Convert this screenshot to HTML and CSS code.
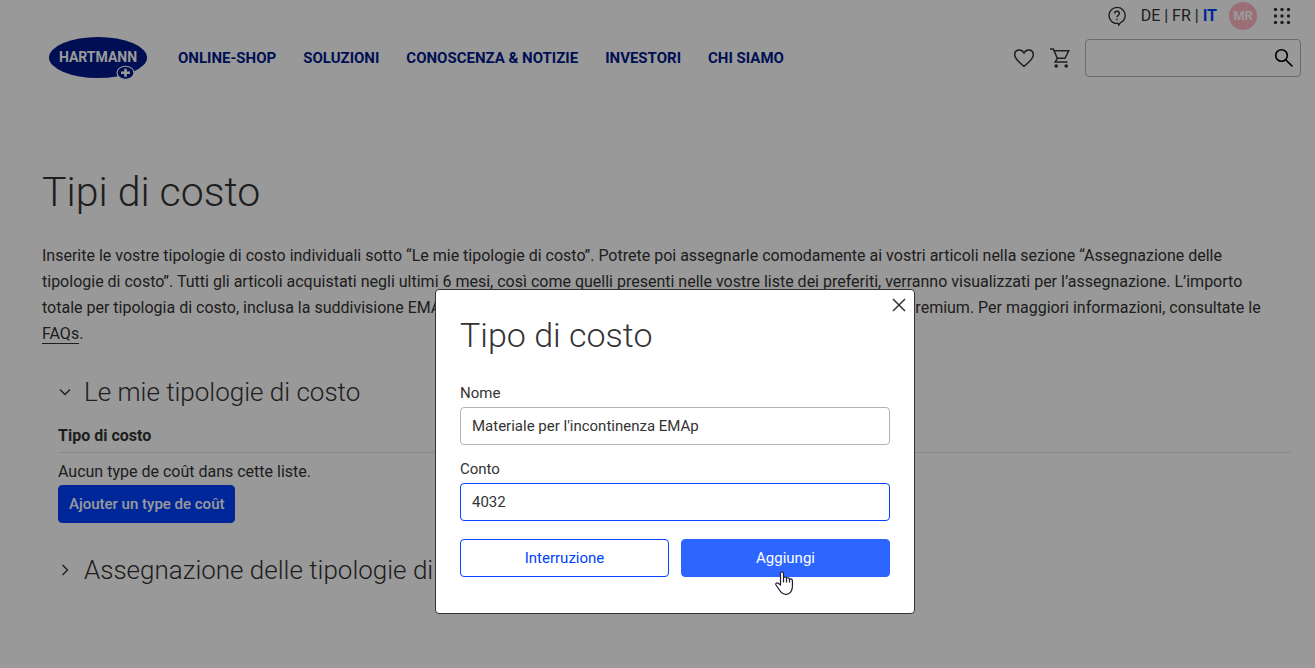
FILE: index.html
```html
<!DOCTYPE html>
<html lang="it">
<head>
    <meta charset="UTF-8">
    <meta name="viewport" content="width=device-width, initial-scale=1">
    <title>Tipi di costo</title>
    <link rel="stylesheet" href="styles.css">
</head>
<body>
<header class="header">
    <div class="meta">
        <a class="icon-link" href="#" aria-label="Aiuto">
            <svg width="20" height="20" viewBox="0 0 20 20" fill="none" stroke="currentColor" stroke-width="1.4">
                <path d="M11.6 17.2V19.2L13.4 16.7A8 8 0 1 0 10 17.4H11.6"/>
                <path d="M7.7 7.4C7.7 4.6 12.3 4.6 12.3 7.4C12.3 9.2 10 9.2 10 11.3"/>
                <path d="M10 12.7V14.2"/>
            </svg>
        </a>
        <div class="languages">
            <a href="#">DE</a> | <a href="#">FR</a> | <a class="active" href="#">IT</a>
        </div>
        <a class="avatar" href="#">MR</a>
        <button class="apps" type="button" aria-label="Menu">
            <svg width="18" height="18" viewBox="0 0 18 18" fill="currentColor">
                <circle cx="2.5" cy="2.5" r="1.7"/><circle cx="9" cy="2.5" r="1.7"/><circle cx="15.5" cy="2.5" r="1.7"/>
                <circle cx="2.5" cy="9" r="1.7"/><circle cx="9" cy="9" r="1.7"/><circle cx="15.5" cy="9" r="1.7"/>
                <circle cx="2.5" cy="15.5" r="1.7"/><circle cx="9" cy="15.5" r="1.7"/><circle cx="15.5" cy="15.5" r="1.7"/>
            </svg>
        </button>
    </div>
    <div class="main-bar">
        <a class="logo" href="#" aria-label="HARTMANN">
            <svg width="100" height="44" viewBox="0 0 100 44">
                <ellipse cx="50" cy="21.5" rx="49" ry="20.5" fill="#00198c"/>
                <text x="50" y="26" text-anchor="middle" class="logo-text">HARTMANN</text>
                <ellipse cx="77.5" cy="36.8" rx="8.5" ry="6.6" fill="#00198c" stroke="#fff" stroke-width="1.1"/>
                <path d="M77.5 32.8V40.8M73 36.8H82" stroke="#fff" stroke-width="2.6"/>
            </svg>
        </a>
        <nav class="nav">
            <a href="#">ONLINE-SHOP</a>
            <a href="#">SOLUZIONI</a>
            <a href="#">CONOSCENZA &amp; NOTIZIE</a>
            <a href="#">INVESTORI</a>
            <a href="#">CHI SIAMO</a>
        </nav>
        <div class="tools">
            <a class="icon-link" href="#" aria-label="Preferiti">
                <svg width="22" height="20" viewBox="0 0 22 20" fill="none" stroke="currentColor" stroke-width="1.5">
                    <path d="M11 18.5C8 15.5 1.7 11.5 1.7 6.7C1.7 1.2 8.5 .3 11 5C13.5 .3 20.3 1.2 20.3 6.7C20.3 11.5 14 15.5 11 18.5Z"/>
                </svg>
            </a>
            <a class="icon-link" href="#" aria-label="Carrello">
                <svg width="20" height="20" viewBox="0 0 20 20" fill="none" stroke="currentColor" stroke-width="1.5">
                    <path d="M0 1H3.3L7.3 10.3H15L18.8 2.8H4.2"/>
                    <path d="M7.3 10.3L5.2 14H17.5"/>
                    <circle cx="6.2" cy="18" r="1.8" fill="currentColor" stroke="none"/>
                    <circle cx="16.2" cy="18" r="1.8" fill="currentColor" stroke="none"/>
                </svg>
            </a>
            <form class="search">
                <input type="search" aria-label="Cerca">
                <button type="submit" aria-label="Cerca">
                    <svg width="20" height="20" viewBox="0 0 20 20" fill="none" stroke="currentColor" stroke-width="1.6">
                        <circle cx="7.5" cy="7.5" r="5.8"/>
                        <path d="M11.6 11.6L18.5 18.5"/>
                    </svg>
                </button>
            </form>
        </div>
    </div>
</header>

<main class="content">
    <h1>Tipi di costo</h1>
    <p class="intro">Inserite le vostre tipologie di costo individuali sotto “Le mie tipologie di costo”. Potrete poi assegnarle comodamente ai vostri articoli nella sezione “Assegnazione delle tipologie di costo”. Tutti gli articoli acquistati negli ultimi 6 mesi, così come quelli presenti nelle vostre liste dei preferiti, verranno visualizzati per l’assegnazione. L’importo totale per tipologia di costo, inclusa la suddivisione EMAp, è disponibile e consultabile nelle statistiche del vostro account Premium. Per maggiori informazioni, consultate le <a href="#">FAQs</a>.</p>

    <section class="panel">
        <h2>
            <svg width="14" height="14" viewBox="0 0 14 14" fill="none" stroke="currentColor" stroke-width="1.4"><path d="M2 4.5L7 9.5L12 4.5"/></svg>
            Le mie tipologie di costo
        </h2>
        <table>
            <thead>
            <tr><th>Tipo di costo</th></tr>
            </thead>
            <tbody>
            <tr><td>Aucun type de coût dans cette liste.</td></tr>
            </tbody>
        </table>
        <button class="btn btn-add" type="button">Ajouter un type de coût</button>
    </section>

    <section class="panel">
        <h2>
            <svg width="14" height="14" viewBox="0 0 14 14" fill="none" stroke="currentColor" stroke-width="1.4"><path d="M4.5 2L9.5 7L4.5 12"/></svg>
            Assegnazione delle tipologie di costo
        </h2>
    </section>
</main>

<div class="overlay">
    <div class="modal" role="dialog" aria-modal="true" aria-labelledby="modalTitle">
        <button class="close" type="button" aria-label="Chiudi">
            <svg width="14" height="14" viewBox="0 0 14 14" fill="none" stroke="currentColor" stroke-width="1.5"><path d="M1 1L13 13M13 1L1 13"/></svg>
        </button>
        <h2 id="modalTitle">Tipo di costo</h2>
        <form>
            <label for="name">Nome</label>
            <input type="text" id="name" value="Materiale per l'incontinenza EMAp">
            <label for="account">Conto</label>
            <input class="focused" type="text" id="account" value="4032">
            <div class="actions">
                <button class="btn btn-outline" type="button">Interruzione</button>
                <button class="btn btn-primary" type="submit">Aggiungi
                    <svg class="pointer" width="18" height="24" viewBox="0 0 18 24" fill="#fff" stroke="#1c1c30" stroke-width="1.2" stroke-linejoin="round">
                        <path d="M5.5 14V2.2C5.5 .3 8.5 .3 8.5 2.2V7C9.3 5.5 11.5 5.8 11.5 7.3C12.5 6.3 14.5 6.7 14.5 8.3C15.8 7.5 17.4 8.2 17.4 9.8V15.5C17.4 20 14.8 23.3 11 23.3C7.5 23.3 5.5 21 3.8 18L1 14C0 12.5 2 11.3 3.3 12.3Z"/>
                        <path d="M8.5 7V11.5M11.5 7.3V11.5M14.5 8.3V11.5"/>
                    </svg>
                </button>
            </div>
        </form>
    </div>
</div>
</body>
</html>
```
FILE: styles.css
```css
* {
    box-sizing: border-box;
}

body {
    margin: 0;
    background-color: #fff;
    color: #333;
    font-family: Roboto, 'Liberation Sans', sans-serif;
    font-size: 16px;
    line-height: 26px;
}

a {
    color: inherit;
    text-decoration: none;
}

button,
input {
    font-family: inherit;
    font-size: 15px;
    color: inherit;
}

button {
    padding: 0;
    border: none;
    background: none;
    cursor: pointer;
}

svg {
    display: block;
}

.header {
    padding: 0 14px 0 48px;
}

.meta {
    display: flex;
    justify-content: flex-end;
    align-items: center;
    height: 32px;
    padding-right: 10px;
}

.languages {
    margin: 0 12px 0 14px;
}

.languages .active {
    color: #0042ff;
    font-weight: 700;
}

.avatar {
    width: 28px;
    height: 28px;
    margin-right: 16px;
    border-radius: 50%;
    background-color: #ffb9c3;
    color: #fff;
    font-size: 13px;
    font-weight: 700;
    line-height: 28px;
    text-align: center;
}

.main-bar {
    display: flex;
    align-items: center;
    height: 52px;
}

.logo-text {
    fill: #fff;
    font-size: 14px;
    font-weight: 700;
}

.nav {
    display: flex;
    flex: 1;
    gap: 27px;
    margin-left: 30px;
    color: #00198c;
    font-size: 15px;
    font-weight: 700;
}

.tools {
    display: flex;
    align-items: center;
    gap: 15px;
}

.search {
    display: flex;
    align-items: center;
    width: 216px;
    height: 38px;
    padding-right: 6px;
    border: 1px solid #b3b3b3;
    border-radius: 4px;
    color: #000;
}

.search input {
    flex: 1;
    min-width: 0;
    height: 36px;
    padding: 0 12px;
    border: none;
    outline: none;
    background: none;
}

.content {
    padding: 84px 24px 0 42px;
}

h1,
h2 {
    margin: 0;
    font-weight: 300;
}

h1 {
    font-size: 41px;
    line-height: 48px;
}

.intro {
    margin: 27px 0 30px;
    padding-right: 20px;
}

.intro a {
    border-bottom: 1px solid #333;
}

.panel {
    padding-left: 16px;
    margin-bottom: 32px;
}

.panel h2 {
    display: flex;
    align-items: center;
    gap: 12px;
    font-size: 26px;
    line-height: 30px;
}

table {
    width: 100%;
    margin-top: 11px;
    border-collapse: collapse;
}

th {
    padding: 5px 0 3px;
    border-bottom: 1px solid #e6e6e6;
    text-align: left;
}

td {
    padding: 6px 0 0;
}

.btn {
    height: 38px;
    border: 1px solid #0042ff;
    border-radius: 4px;
}

.btn-add {
    padding: 0 10px;
    background-color: #0042ff;
    color: #fff;
    font-weight: 500;
}

.overlay {
    position: fixed;
    inset: 0;
    display: flex;
    justify-content: center;
    align-items: flex-start;
    padding: 289px 0 0 35px;
    background-color: rgba(0, 0, 0, 0.4);
}

.modal {
    position: relative;
    width: 480px;
    padding: 23px 24px 36px;
    border: 1px solid #333;
    border-radius: 4px;
    background-color: #fff;
}

.modal h2 {
    margin-bottom: 23px;
    font-size: 34px;
    line-height: 44px;
}

.close {
    position: absolute;
    top: 8px;
    right: 8px;
}

.modal label {
    display: block;
    margin-bottom: 1px;
    font-size: 15px;
}

.modal input {
    display: block;
    width: 100%;
    height: 38px;
    margin-bottom: 11px;
    padding: 0 11px;
    border: 1px solid #b3b3b3;
    border-radius: 4px;
    outline: none;
    background-color: #fff;
}

.modal input.focused {
    border-color: #0042ff;
}

.actions {
    display: grid;
    grid-template-columns: 1fr 1fr;
    gap: 12px;
    margin-top: 18px;
}

.btn-outline {
    background-color: #fff;
    color: #0042ff;
}

.btn-primary {
    position: relative;
    border-color: #2d66ff;
    background-color: #2d66ff;
    color: #fff;
}

/* mouse pointer over the button */
.pointer {
    position: absolute;
    top: 31px;
    left: 45%;
}
```
